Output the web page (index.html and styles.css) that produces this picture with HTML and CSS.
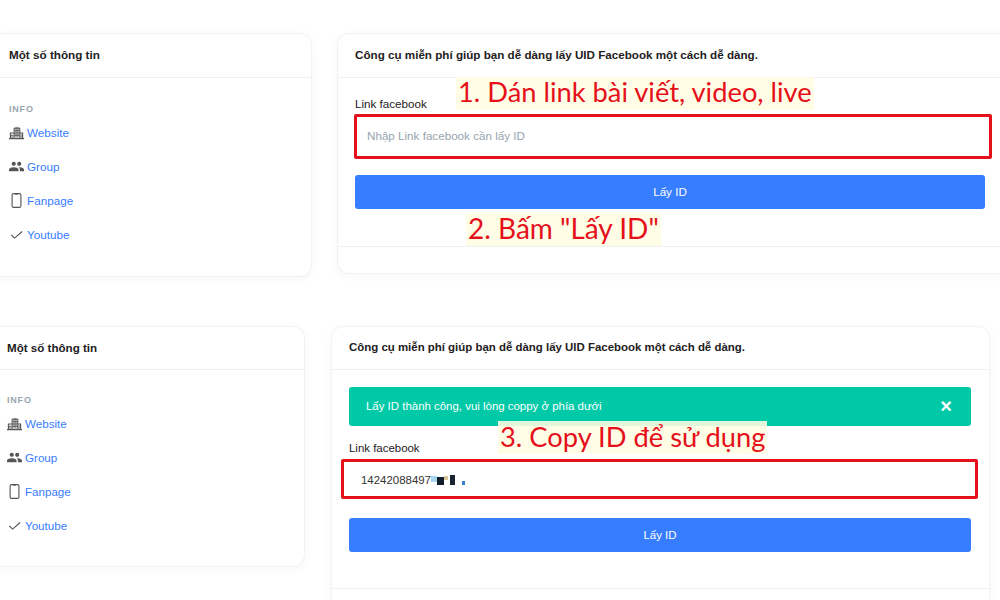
FILE: index.html
```html
<!DOCTYPE html>
<html lang="vi">
<head>
    <meta charset="UTF-8">
    <link rel="stylesheet" href="styles.css">
</head>
<body>
    <svg class="icon-defs" width="0" height="0">
        <symbol id="i-building" viewBox="0 0 16 16">
            <path d="M5.500 14V3.500h6V14" fill="none" stroke="currentColor" stroke-width="1.100"/>
            <path d="M7.500 2v11.500M9.500 2v11.500M5.500 6h6M5.500 8.500h6M5.500 11h6" stroke="currentColor" stroke-width="1"/>
            <path d="M1.500 14V8.500h4M11.500 8.500h3V14M0 14.500h16" fill="none" stroke="currentColor" stroke-width="1.200"/>
            <path d="M2 11h3M2 12.800h3M12 10.700h2.500M12 12.700h2.500" stroke="currentColor" stroke-width="1"/>
        </symbol>
        <symbol id="i-group" viewBox="1 1 22 22">
            <path fill="currentColor" d="M16 11c1.660 0 2.990-1.340 2.990-3S17.660 5 16 5c-1.660 0-3 1.340-3 3s1.340 3 3 3zm-8 0c1.660 0 2.990-1.340 2.990-3S9.660 5 8 5C6.340 5 5 6.340 5 8s1.340 3 3 3zm0 2c-2.330 0-7 1.170-7 3.500V19h14v-2.500c0-2.330-4.670-3.500-7-3.500zm8 0c-.290 0-.620.020-.970.050 1.160.840 1.970 1.970 1.970 3.450V19h6v-2.500c0-2.330-4.670-3.500-7-3.500z"/>
        </symbol>
        <symbol id="i-phone" viewBox="0 0 16 16">
            <rect x="3.300" y=".7" width="9.400" height="14.600" rx="1.500" fill="none" stroke="currentColor" stroke-width="1.200"/>
            <path d="M6.500 1.200h3" stroke="currentColor" stroke-width="1.200"/>
        </symbol>
        <symbol id="i-check" viewBox="0 0 16 16">
            <path d="M2.500 8.500l3.500 3.300L14 4.800" fill="none" stroke="currentColor" stroke-width="1.200"/>
        </symbol>
    </svg>

    <!-- Bước 1, 2 -->
    <section class="row row-first">
        <aside class="card side side-first">
            <div class="card-head">Một số thông tin</div>
            <div class="side-body">
                <div class="side-label">INFO</div>
                <a class="side-link"><svg class="icon"><use href="#i-building"/></svg>Website</a>
                <a class="side-link"><svg class="icon"><use href="#i-group"/></svg>Group</a>
                <a class="side-link"><svg class="icon"><use href="#i-phone"/></svg>Fanpage</a>
                <a class="side-link"><svg class="icon"><use href="#i-check"/></svg>Youtube</a>
            </div>
        </aside>
        <main class="card tool tool-first">
            <div class="card-head">Công cụ miễn phí giúp bạn dễ dàng lấy UID Facebook một cách dễ dàng.</div>
            <div class="tool-body">
                <label class="field-label">Link facebook</label>
                <div class="field placeholder">Nhập Link facebook cần lấy ID</div>
                <button class="btn">Lấy ID</button>
            </div>
            <div class="card-foot"></div>
            <div class="note note-1">1. Dán link bài viết, video, live</div>
            <div class="note note-2">2. Bấm "Lấy ID"</div>
            <div class="red-box red-box-1"></div>
        </main>
    </section>

    <!-- Bước 3 -->
    <section class="row row-second">
        <aside class="card side side-second">
            <div class="card-head">Một số thông tin</div>
            <div class="side-body">
                <div class="side-label">INFO</div>
                <a class="side-link"><svg class="icon"><use href="#i-building"/></svg>Website</a>
                <a class="side-link"><svg class="icon"><use href="#i-group"/></svg>Group</a>
                <a class="side-link"><svg class="icon"><use href="#i-phone"/></svg>Fanpage</a>
                <a class="side-link"><svg class="icon"><use href="#i-check"/></svg>Youtube</a>
            </div>
        </aside>
        <main class="card tool tool-second">
            <div class="card-head">Công cụ miễn phí giúp bạn dễ dàng lấy UID Facebook một cách dễ dàng.</div>
            <div class="tool-body">
                <div class="alert">
                    <span>Lấy ID thành công, vui lòng coppy ở phía dưới</span>
                    <span class="alert-close">×</span>
                </div>
                <label class="field-label">Link facebook</label>
                <div class="field value">14242088497<span class="blur"><i class="b1"></i><i class="b2"></i><i class="b3"></i><i class="b4"></i><i class="b5"></i></span></div>
                <button class="btn">Lấy ID</button>
            </div>
            <div class="card-foot"></div>
            <div class="note note-3">3. Copy ID để sử dụng</div>
            <div class="red-box red-box-2"></div>
        </main>
    </section>
</body>
</html>
```

FILE: styles.css
```css
* {
    box-sizing: border-box;
}

body {
    margin: 0;
    height: 600px;
    overflow: hidden;
    background: #fff;
    color: #1e2022;
    font-family: "Liberation Sans", Arial, sans-serif;
    font-size: 12px;
}

.icon-defs {
    position: absolute;
}

.row {
    display: flex;
    align-items: flex-start;
    padding-top: 33px;
    height: 293px;
}

.row-second {
    height: 307px;
}

.card {
    position: relative;
    flex-shrink: 0;
    background: #fff;
    border: 1px solid #f1f2f4;
    border-radius: 12px;
    box-shadow: 0 2px 8px rgba(140, 152, 164, 0.08);
}

.card-head {
    height: 44px;
    padding: 0 0 2px 17px;
    display: flex;
    align-items: center;
    border-bottom: 1px solid #f0f1f3;
    font-weight: bold;
    white-space: nowrap;
}

.row-second .card-head {
    height: 43px;
}

.side-first {
    width: 322px;
    height: 244px;
    margin-left: -10px;
    margin-right: 25px;
    font-size: 11.7px;
}

.side-second {
    width: 318px;
    height: 241px;
    margin-left: -13px;
    margin-right: 26px;
    font-size: 11.6px;
}

.side .card-head {
    padding-left: 18px;
}

.side-second .card-head {
    padding-left: 19px;
}

.side-body {
    padding: 26px 19px 0 18px;
}

.side-second .side-body {
    padding-top: 25px;
    padding-left: 19px;
}

.side-label {
    height: 10px;
    line-height: 10px;
    font-size: 9px;
    font-weight: bold;
    letter-spacing: 0.8px;
    color: #97a4af;
    margin-bottom: 1px;
}

.side-link {
    display: flex;
    align-items: center;
    height: 34px;
    color: #377dff;
}

.icon {
    width: 15px;
    height: 15px;
    margin-right: 3px;
    color: #555;
    flex-shrink: 0;
}

.tool-first {
    width: 680px;
    height: 241px;
    font-size: 11.65px;
}

.tool-second {
    width: 659px;
    height: 300px;
    font-size: 11.45px;
}

.tool-body {
    padding: 0 18px 0 17px;
    display: flex;
    flex-direction: column;
}

.tool-first .tool-body {
    height: 168px;
    padding-top: 18px;
    padding-right: 31px;
}

.tool-second .tool-body {
    height: 218px;
    padding-top: 17px;
}

.field-label {
    height: 16px;
    line-height: 16px;
    color: #1e2022;
}

.field {
    display: flex;
    align-items: center;
    margin-top: 4px;
    padding: 0 12px;
    background: #fff;
}

.tool-first .field {
    height: 40px;
    padding-bottom: 2px;
}

.tool-second .field {
    height: 38px;
    padding-top: 2px;
}

.placeholder {
    color: #97a4af;
}

.value {
    color: #333;
}

/* phần ID bị làm mờ */
.blur {
    display: flex;
    align-items: flex-end;
    height: 10px;
}

.blur i {
    display: block;
    flex-shrink: 0;
}

.blur .b1 {
    width: 6px;
    height: 6px;
    margin-bottom: 3px;
    background: #a9d6ee;
}

.blur .b2 {
    width: 7px;
    height: 8px;
    background: #111c2c;
}

.blur .b3 {
    width: 4px;
    height: 4px;
    margin: 0 2px 5px 0;
    background: #d8c59a;
}

.blur .b4 {
    width: 5px;
    height: 10px;
    margin-right: 7px;
    background: #1a2433;
}

.blur .b5 {
    width: 3px;
    height: 4px;
    background: #3a7ec8;
}

.btn {
    height: 34px;
    border: 0;
    border-radius: 3px;
    background: #377dff;
    color: #fff;
    font-family: inherit;
    font-size: inherit;
}

.tool-first .btn {
    margin-top: 19px;
    padding-bottom: 3px;
}

.tool-second .btn {
    margin-top: 20px;
    padding-bottom: 2px;
}

.alert {
    display: flex;
    align-items: center;
    justify-content: space-between;
    height: 39px;
    margin-bottom: 14px;
    padding: 0 19px 1px 17px;
    border-radius: 3px;
    background: #00c9a7;
    color: #fff;
}

.alert-close {
    font-size: 20px;
    font-weight: bold;
}

.card-foot {
    border-top: 1px solid #f0f1f3;
}

/* chú thích đỏ nằm đè lên ảnh chụp */
.note {
    position: absolute;
    padding: 0 2px 2px;
    background: rgba(255, 253, 226, 0.88);
    color: #e5101a;
    font-family: Lato, "Open Sans", sans-serif;
    font-size: 27.3px;
    line-height: 31px;
    white-space: nowrap;
}

.note-1 {
    left: 118px;
    top: 43px;
    padding: 0 2px 4px;
    line-height: 29px;
}

.note-2 {
    left: 128px;
    top: 179px;
    font-size: 28px;
}

.note-3 {
    left: 166px;
    top: 94px;
}

.red-box {
    position: absolute;
    border: 3px solid #e5101a;
    border-radius: 2px;
}

.red-box-1 {
    left: 16px;
    top: 80px;
    width: 638px;
    height: 45px;
}

.red-box-2 {
    left: 9px;
    top: 132px;
    width: 637px;
    height: 40px;
}
```
